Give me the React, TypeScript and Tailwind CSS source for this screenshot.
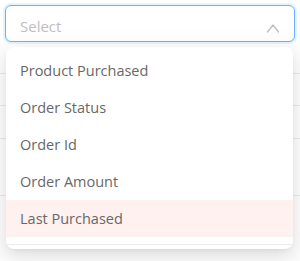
import React from "react";

const options = ["Product Purchased", "Order Status", "Order Id", "Order Amount", "Last Purchased"];

export default function App() {
  const active = "Last Purchased";

  return (
    <div className="relative h-[261px] w-[300px] overflow-hidden bg-white font-['Open_Sans',sans-serif]">
      <div className="px-[5px] pt-[5px]">
        <div className="flex h-[37px] items-center justify-between rounded-[6px] border border-[#69b1ff] bg-white pl-[14px] pr-[14px] pt-[6px] shadow-[0_0_0_2px_rgba(5,145,255,0.1)]">
          <span className="text-[15px] text-[#bfbfbf]">Select</span>
          <svg className="mt-[3px]" width="14" height="10" viewBox="0 0 14 10" fill="none" stroke="#bfbfbf" strokeWidth="1.3" strokeLinecap="round" strokeLinejoin="round">
            <path d="M1.5 9 7 2 12.5 9" />
          </svg>
        </div>
      </div>

      {/* table rows underneath */}
      <div className="h-[32px] border-b border-[#ebebeb]" />
      <div className="h-[32px] border-b border-[#ebebeb]" />
      <div className="h-[33px] border-b border-[#ebebeb]" />
      <div className="h-[57px] border-b border-[#ebebeb]" />

      <div className="absolute left-[6px] top-[47px] w-[287px] overflow-hidden rounded-[8px] bg-white pt-[5px] shadow-[0_6px_16px_0_rgba(0,0,0,0.08),0_3px_6px_-4px_rgba(0,0,0,0.12),0_9px_28px_8px_rgba(0,0,0,0.05)]">
        {options.map((item) => (
          <div
            key={item}
            className={`flex h-[37px] items-center px-[14px] text-[14.5px] text-[#686868] ${
              item === active ? "bg-[#fef1ef]" : ""
            }`}
          >
            {item}
          </div>
        ))}
        <div className="h-[7px]" />
        <div className="h-[5px] border-t border-[#ededed]" />
      </div>
    </div>
  );
}
